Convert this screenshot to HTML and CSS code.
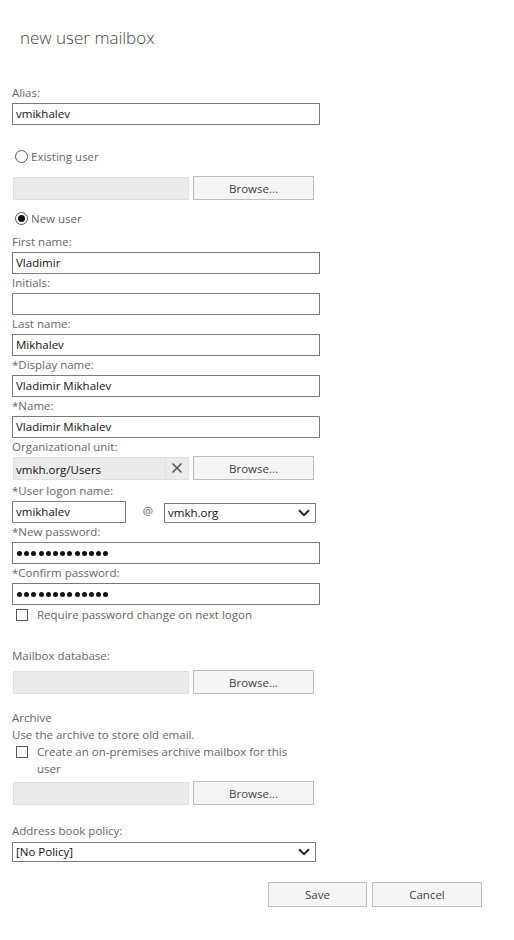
FILE: index.html
```html
<!DOCTYPE html>
<html lang="en">
<head>
<meta charset="utf-8">
<title>new user mailbox</title>
<link rel="stylesheet" href="styles.css">
</head>
<body>
<div class="page">
  <h1 class="title">new user mailbox</h1>

  <div class="field">
    <label class="lbl">Alias:</label>
    <div class="input w-full">vmikhalev</div>
  </div>

  <div class="radio-row r-existing"><span class="radio"></span><span>Existing user</span></div>
  <div class="pick-row r-existing-box">
    <div class="disabled-box"></div>
    <div class="btn browse">Browse...</div>
  </div>

  <div class="radio-row r-new"><span class="radio checked"></span><span>New user</span></div>

  <div class="fields">
    <div class="field">
      <label class="lbl">First name:</label>
      <div class="input w-full">Vladimir</div>
    </div>
    <div class="field">
      <label class="lbl">Initials:</label>
      <div class="input w-full"></div>
    </div>
    <div class="field">
      <label class="lbl">Last name:</label>
      <div class="input w-full">Mikhalev</div>
    </div>
    <div class="field">
      <label class="lbl">*Display name:</label>
      <div class="input w-full">Vladimir Mikhalev</div>
    </div>
    <div class="field">
      <label class="lbl">*Name:</label>
      <div class="input w-full">Vladimir Mikhalev</div>
    </div>
    <div class="field f-ou">
      <label class="lbl">Organizational unit:</label>
      <div class="pick-row">
        <div class="disabled-box ou">
          <span class="ou-text">vmkh.org/Users</span>
          <span class="ou-clear">
            <svg width="12" height="12" viewBox="0 0 12 12"><path d="M1.5 1.5 L10.5 10.5 M10.5 1.5 L1.5 10.5" stroke="#555" stroke-width="1.6" fill="none"/></svg>
          </span>
        </div>
        <div class="btn browse">Browse...</div>
      </div>
    </div>
    <div class="field f-logon">
      <label class="lbl">*User logon name:</label>
      <div class="logon-row">
        <div class="input w-logon">vmikhalev</div>
        <span class="at">@</span>
        <div class="select w-domain"><span>vmkh.org</span>
          <svg class="chev" width="12" height="8" viewBox="0 0 12 8"><path d="M1 1.2 L6 6.2 L11 1.2" stroke="#222" stroke-width="2" fill="none"/></svg>
        </div>
      </div>
    </div>
    <div class="field">
      <label class="lbl">*New password:</label>
      <div class="input w-full dots"><span class="d"></span><span class="d"></span><span class="d"></span><span class="d"></span><span class="d"></span><span class="d"></span><span class="d"></span><span class="d"></span><span class="d"></span><span class="d"></span><span class="d"></span><span class="d"></span><span class="d"></span></div>
    </div>
    <div class="field">
      <label class="lbl">*Confirm password:</label>
      <div class="input w-full dots"><span class="d"></span><span class="d"></span><span class="d"></span><span class="d"></span><span class="d"></span><span class="d"></span><span class="d"></span><span class="d"></span><span class="d"></span><span class="d"></span><span class="d"></span><span class="d"></span><span class="d"></span></div>
    </div>
  </div>

  <div class="check-row r-require"><span class="checkbox"></span><span class="check-text">Require password change on next logon</span></div>

  <div class="lbl l-mailbox">Mailbox database:</div>
  <div class="pick-row r-mailbox">
    <div class="disabled-box"></div>
    <div class="btn browse">Browse...</div>
  </div>

  <div class="lbl l-archive">Archive</div>
  <div class="lbl">Use the archive to store old email.</div>
  <div class="check-row r-archive"><span class="checkbox"></span><span class="check-text">Create an on-premises archive mailbox for this user</span></div>
  <div class="pick-row r-archive-box">
    <div class="disabled-box"></div>
    <div class="btn browse">Browse...</div>
  </div>

  <div class="lbl l-abp">Address book policy:</div>
  <div class="select w-abp"><span>[No Policy]</span>
    <svg class="chev" width="12" height="8" viewBox="0 0 12 8"><path d="M1 1.2 L6 6.2 L11 1.2" stroke="#222" stroke-width="2" fill="none"/></svg>
  </div>

  <div class="actions">
    <div class="btn save">Save</div>
    <div class="btn cancel">Cancel</div>
  </div>
</div>
</body>
</html>
```

FILE: styles.css
```css
* { box-sizing: border-box; }
html, body { margin: 0; padding: 0; background: #fff; }
body {
  font-family: "Open Sans", "Noto Sans", "Liberation Sans", sans-serif;
  font-size: 11.5px;
  color: #222;
}
.page { padding: 0 0 0 12px; width: 514px; }

.title {
  margin: 0 0 0 8px;
  padding-top: 26px;
  height: 84px;
  font-size: 17px;
  line-height: 24px;
  font-weight: 300;
  color: #444;
}

.lbl {
  display: block;
  line-height: 17px;
  height: 17px;
  color: #666;
  white-space: nowrap;
}
.field .lbl { margin-bottom: 2px; }

.input {
  height: 22px;
  border: 1px solid #7a7a7a;
  padding: 0 3px;
  line-height: 20px;
  color: #111;
  background: #fff;
}
.w-full { width: 308px; }
.w-logon { width: 114px; }

.dots { display: flex; align-items: center; gap: 2.2px; padding-left: 4px; }
.d { width: 5px; height: 5px; border-radius: 50%; background: #111; }

.radio-row { display: flex; align-items: center; height: 18px; color: #666; }
.radio {
  width: 13px; height: 13px; margin: 0 3px 0 3px;
  border: 1px solid #555; border-radius: 50%; background: #fff;
  display: flex; align-items: center; justify-content: center;
}
.radio.checked::after { content: ""; width: 7px; height: 7px; border-radius: 50%; background: #111; }
.r-existing { margin-top: 22px; }
.r-existing-box { margin-top: 11px; }
.r-new { margin-top: 9px; }
.fields { margin-top: 6px; }

.pick-row { display: flex; align-items: center; gap: 4px; height: 24px; }
.disabled-box {
  width: 176px; height: 23px; margin-left: 1px;
  background: #ebebeb; border: 1px solid #dedede;
}
.browse { width: 121px; height: 24px; }
.btn {
  display: flex; align-items: center; justify-content: center;
  background: #f5f5f5; border: 1px solid #bdbdbd; color: #444;
}

.ou { display: flex; align-items: stretch; }
.ou-text { flex: 1; line-height: 23px; padding-left: 2px; color: #111; border-right: 1px solid #e2e2e2; }
.ou-clear { width: 22px; display: flex; align-items: center; justify-content: center; }
.f-ou .lbl { margin-bottom: 1px; }

.f-logon .lbl { margin-top: 2px; }
.logon-row { display: flex; align-items: flex-start; height: 22px; }
.at { width: 38px; padding-left: 6px; text-align: center; line-height: 20px; color: #666; }
.select {
  position: relative;
  height: 20px; border: 1px solid #7a7a7a; background: #fff;
  padding: 0 3px; line-height: 18px; color: #111;
  display: flex; align-items: center; justify-content: space-between;
}
.w-domain { width: 152px; margin-top: 2px; }
.w-abp { width: 304px; }
.chev { margin-right: 2px; }

.check-row { display: flex; align-items: flex-start; color: #666; line-height: 17px; }
.checkbox { flex: none; width: 12px; height: 12px; border: 1px solid #555; background: #fff; margin: 3px 9px 0 4px; }
.check-text { width: 270px; white-space: normal; }
.r-require { margin-top: 1px; }
.l-mailbox { margin-top: 24px; margin-bottom: 6px; }
.r-mailbox { margin-top: 0; }
.l-archive { margin-top: 15px; }
.r-archive { margin-top: 0; }
.r-archive-box { margin-top: 4px; }
.l-abp { margin-top: 17px; margin-bottom: 3px; }

.actions { display: flex; gap: 5px; margin-top: 20px; padding-left: 256px; }
.save { width: 99px; height: 25px; }
.cancel { width: 110px; height: 25px; }
```
